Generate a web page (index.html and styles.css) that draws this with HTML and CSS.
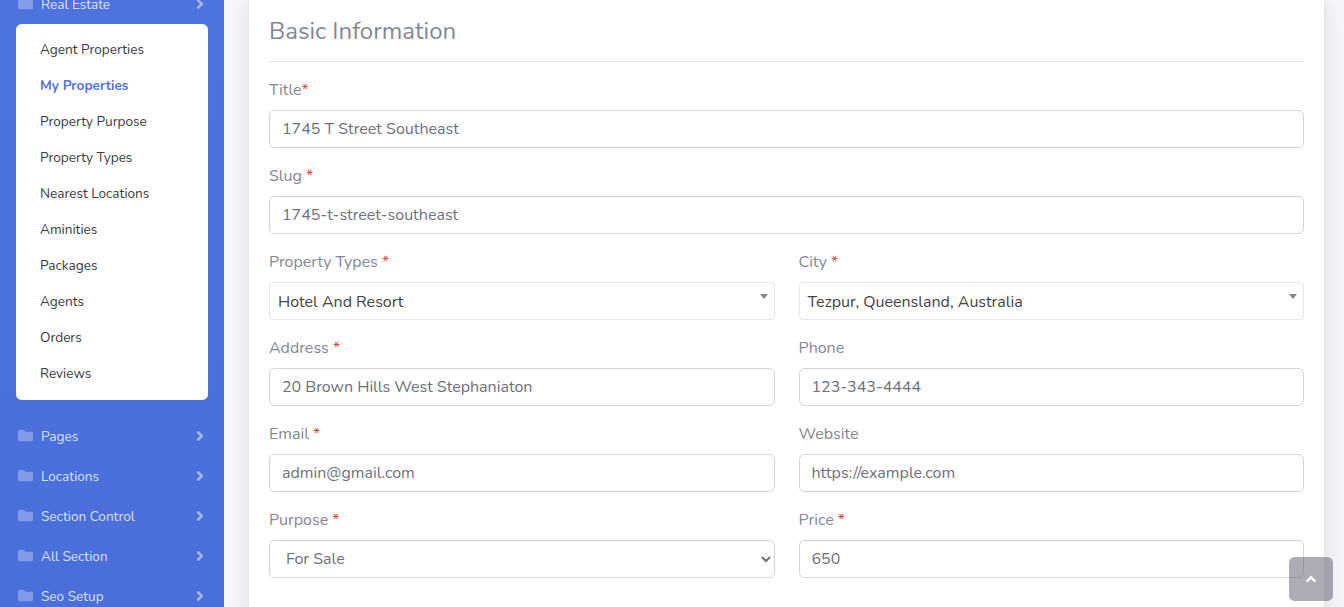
FILE: index.html
```
<!DOCTYPE html>
<html lang="en">
<head>
<meta charset="utf-8">
<title>My Properties</title>
<link rel="stylesheet" href="styles.css">
</head>
<body>
<svg class="sprite" aria-hidden="true">
  <symbol id="folder" viewBox="0 0 512 512"><path d="M464 128H272l-64-64H48C21.500 64 0 85.500 0 112v288c0 26.500 21.500 48 48 48h416c26.500 0 48-21.500 48-48V176c0-26.500-21.500-48-48-48z"/></symbol>
  <symbol id="chevron" viewBox="0 0 256 512"><path d="M224.300 273l-136 136c-9.400 9.400-24.600 9.400-33.900 0l-22.600-22.600c-9.400-9.400-9.400-24.600 0-33.900l96.400-96.400-96.400-96.400c-9.400-9.400-9.400-24.600 0-33.900L54.300 103c9.400-9.400 24.600-9.400 33.900 0l136 136c9.500 9.400 9.500 24.600.1 34z"/></symbol>
  <symbol id="up" viewBox="0 0 320 512"><path d="M177 159.700l136 136c9.400 9.400 9.400 24.600 0 33.900l-22.600 22.600c-9.400 9.400-24.600 9.400-33.900 0L160 255.900l-96.400 96.400c-9.400 9.400-24.600 9.400-33.900 0L7 329.700c-9.400-9.400-9.400-24.600 0-33.900l136-136c9.400-9.500 24.600-9.500 34-.1z"/></symbol>
</svg>
<div class="wrapper">
  <nav class="sidebar">
    <a class="nav-link"><svg class="folder"><use href="#folder"/></svg><span>Real Estate</span><svg class="chevron"><use href="#chevron"/></svg></a>
    <div class="submenu">
      <a>Agent Properties</a>
      <a class="active">My Properties</a>
      <a>Property Purpose</a>
      <a>Property Types</a>
      <a>Nearest Locations</a>
      <a>Aminities</a>
      <a>Packages</a>
      <a>Agents</a>
      <a>Orders</a>
      <a>Reviews</a>
    </div>
    <a class="nav-link"><svg class="folder"><use href="#folder"/></svg><span>Pages</span><svg class="chevron"><use href="#chevron"/></svg></a>
    <a class="nav-link"><svg class="folder"><use href="#folder"/></svg><span>Locations</span><svg class="chevron"><use href="#chevron"/></svg></a>
    <a class="nav-link"><svg class="folder"><use href="#folder"/></svg><span>Section Control</span><svg class="chevron"><use href="#chevron"/></svg></a>
    <a class="nav-link"><svg class="folder"><use href="#folder"/></svg><span>All Section</span><svg class="chevron"><use href="#chevron"/></svg></a>
    <a class="nav-link last"><svg class="folder"><use href="#folder"/></svg><span>Seo Setup</span><svg class="chevron"><use href="#chevron"/></svg></a>
  </nav>
  <main class="content">
    <form class="card">
      <h4>Basic Information</h4>
      <hr>
      <div class="form-grid">
        <div class="field wide"><label>Title<b>*</b></label><input class="control" value="1745 T Street Southeast"></div>
        <div class="field wide"><label>Slug <b>*</b></label><input class="control" value="1745-t-street-southeast"></div>
        <div class="field"><label>Property Types <b>*</b></label><div class="picker"><span>Hotel And Resort</span><i class="caret"></i></div></div>
        <div class="field"><label>City <b>*</b></label><div class="picker"><span>Tezpur, Queensland, Australia</span><i class="caret"></i></div></div>
        <div class="field"><label>Address <b>*</b></label><input class="control" value="20 Brown Hills West Stephaniaton"></div>
        <div class="field"><label>Phone</label><input class="control" value="123-343-4444"></div>
        <div class="field"><label>Email <b>*</b></label><input class="control" value="admin@gmail.com"></div>
        <div class="field"><label>Website</label><input class="control" value="https://example.com"></div>
        <div class="field"><label>Purpose <b>*</b></label><select class="control"><option>For Sale</option></select></div>
        <div class="field"><label>Price <b>*</b></label><input class="control" value="650"></div>
      </div>
    </form>
  </main>
</div>
<a class="scroll-top"><svg><use href="#up"/></svg></a>
</body>
</html>
```
FILE: styles.css
```
* { box-sizing: border-box; }
html, body { height: 100%; overflow: hidden; }
body {
  margin: 0;
  background: #f8f9fc;
  color: #858796;
  font: 400 16px/24px Nunito, Lato, "Open Sans", sans-serif;
}
.sprite { display: none; }
.wrapper { display: flex; align-items: flex-start; height: 607px; overflow: hidden; }

/* Sidebar */
.sidebar {
  flex: 0 0 224px;
  height: 623px;
  margin-top: -16px;
  background: linear-gradient(180deg, #4e73df 10%, #4a6fdb 100%);
}
.nav-link {
  display: flex;
  align-items: center;
  height: 40px;
  padding: 0 16px 0 17.5px;
  color: rgba(255, 255, 255, .8);
  font-size: 13.6px;
}
.nav-link span { padding-top: 2px; }
.nav-link .folder { width: 15px; height: 15px; margin: 0 8.5px 1px 0; fill: rgba(255, 255, 255, .3); }
.nav-link .chevron { width: 8px; height: 16px; margin-left: auto; margin-right: 4px; fill: rgba(255, 255, 255, .5); }
.submenu {
  margin: 0 16px 16px;
  padding: 8px 0;
  border-radius: 5.6px;
  background: #fff;
  font-size: 13.6px;
}
.submenu a { display: block; padding: 0 24px; line-height: 36px; color: #3a3b45; }
.submenu .active { color: #4e73df; font-weight: 700; }

/* Form card */
.content { flex: 1; min-width: 0; height: 607px; padding: 0 19px 0 24px; }
.card {
  height: 680px;
  margin: -5px 0 0;
  padding: 20px;
  border: 1px solid #e3e6f0;
  border-radius: 5.6px;
  background: #fff;
  box-shadow: 0 2.4px 28px rgba(58, 59, 69, .15);
}
h4 { margin: 0 0 15px; padding-top: 1px; font-size: 24px; font-weight: 400; line-height: 29px; }
hr { height: 1px; margin: 0 0 16px; border: 0; background: rgba(0, 0, 0, .1); }
.form-grid { display: grid; grid-template-columns: 1fr 1fr; column-gap: 24px; }
.field { height: 86px; min-width: 0; }
.wide { grid-column: 1 / -1; }
label { display: block; margin-bottom: 8px; }
label b { color: #f00; font-weight: 400; color: #e74a3b; }
.control {
  display: block;
  width: 100%;
  height: 38px;
  padding: 6px 12px;
  border: 1px solid #d1d3e2;
  border-radius: 5.6px;
  background: #fff;
  color: #6e707e;
  font-family: inherit;
  font-size: 16px;
  line-height: 24px;
}
.picker {
  display: flex;
  justify-content: space-between;
  height: 38px;
  padding: 7px 6px 5px 8px;
  border: 1px solid #e3e6f0;
  border-radius: 4px;
  color: #444;
}
.caret {
  margin-top: 4px;
  width: 0;
  height: 0;
  border: solid transparent;
  border-width: 5px 4px 0;
  border-top-color: #888;
}

.scroll-top {
  position: fixed;
  right: 11px;
  bottom: 6px;
  display: grid;
  place-items: center;
  width: 44px;
  height: 44px;
  border-radius: 5.6px;
  background: rgba(90, 92, 105, .5);
}
.scroll-top svg { width: 12px; height: 16px; fill: #fff; }
```
